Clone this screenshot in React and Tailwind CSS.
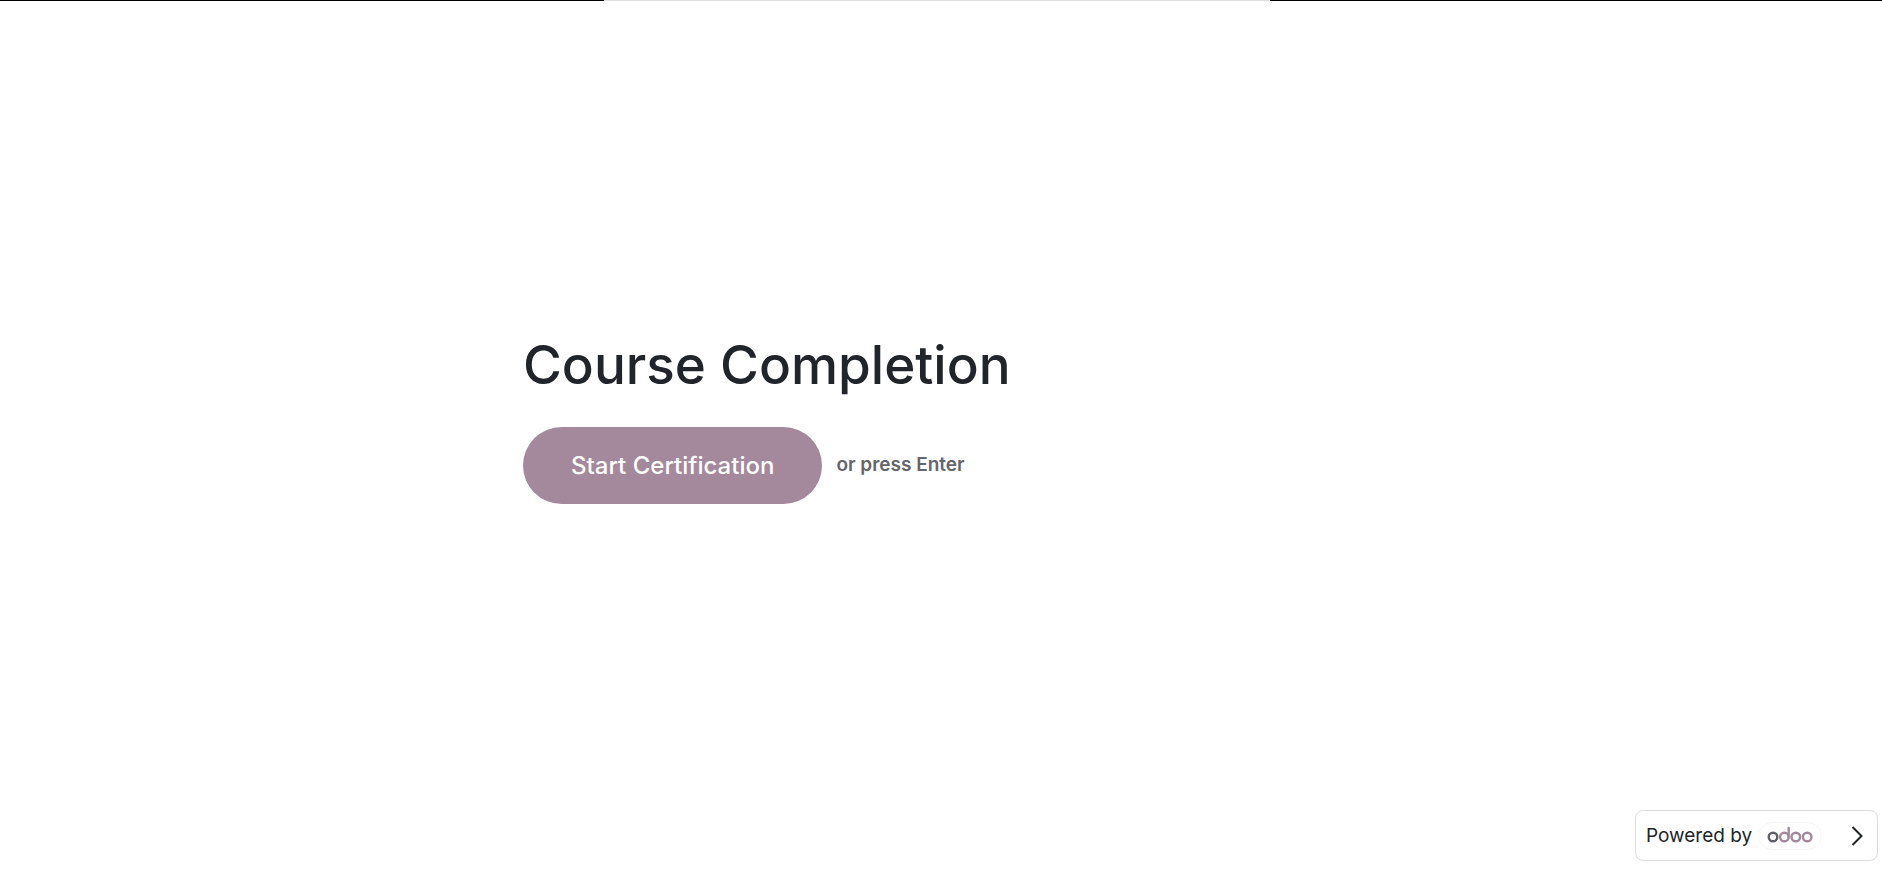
import React, { useEffect, useState } from 'react';

function OdooLogo() {
  return (
    <svg viewBox="0 0 46 18" fill="none" strokeWidth="2.4" className="w-[46px] h-[18px] -mt-1" role="img" aria-label="odoo">
      <circle cx="6" cy="12" r="4.3" stroke="#5f5f66" />
      <g stroke="#a3899b">
        <circle cx="17.4" cy="12" r="4.3" />
        <path d="M21.7 3v9" strokeLinecap="round" />
        <circle cx="28.8" cy="12" r="4.3" />
        <circle cx="40.2" cy="12" r="4.3" />
      </g>
    </svg>
  );
}

function PoweredBy() {
  return (
    <footer className="absolute right-1 bottom-[9px]">
      <a
        href="#odoo"
        className="flex items-center h-[51px] w-[243px] pl-2.5 pr-3.5 rounded-lg border border-[#dcdcde] bg-white text-[#212529] text-[19px] leading-[29px]"
      >
        <span>Powered by</span>
        <span className="flex items-center justify-center w-16 h-7 ml-1.5 rounded-full border border-[#f6f6f6]">
          <OdooLogo />
        </span>
        <svg viewBox="0 0 12 20" fill="none" stroke="currentColor" strokeWidth="2" className="w-3 h-5 ml-auto">
          <path d="M1.5 1l9 9-9 9" />
        </svg>
      </a>
    </footer>
  );
}

export default function App() {
  const [started, setStarted] = useState(false);

  useEffect(() => {
    const onKeyDown = e => {
      if (e.key === 'Enter') setStarted(true);
    };
    window.addEventListener('keydown', onKeyDown);
    return () => window.removeEventListener('keydown', onKeyDown);
  }, []);

  return (
    <div className="relative min-h-screen flex flex-col bg-white font-['Inter',sans-serif] text-[#212529]">
      {/* Top edge, with the lighter middle segment */}
      <div className="flex h-px bg-black">
        <div className="w-[32.1%]" />
        <div className="w-[35.4%] bg-[#dedede]" />
      </div>

      <main className="flex-1 flex flex-col justify-center w-full max-w-[836px] mx-auto pb-9">
        <h1 className="text-[53px] leading-[68px] font-medium mb-7">Course Completion</h1>
        <div className="flex items-center gap-3.5">
          <button
            type="button"
            disabled={started}
            onClick={() => setStarted(true)}
            className="h-[77px] px-12 rounded-full bg-[#a3899b] text-white text-[24px] font-medium cursor-pointer"
          >
            Start Certification
          </button>
          <span className="text-[19px] font-semibold text-[#65656c]">or press Enter</span>
        </div>
      </main>

      <PoweredBy />
    </div>
  );
}
